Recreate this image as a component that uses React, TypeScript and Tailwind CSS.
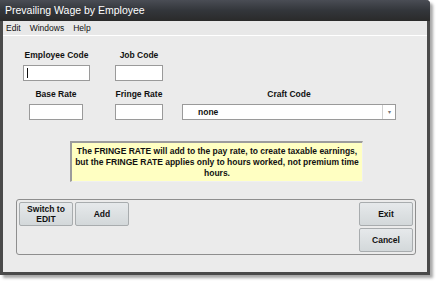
import React from "react";

const font = { fontFamily: '"Liberation Sans", Arial, sans-serif' };

function Field({ label, width, className = "", caret = false }: { label: string; width: string; className?: string; caret?: boolean }) {
  return (
    <div className={`flex flex-col items-center ${className}`}>
      <span className="text-[8.5px] font-bold text-[#111] leading-[11px] mb-[4px]">{label}</span>
      <div className={`${width} h-[16px] bg-white border border-[#9a9a9a] flex items-center pl-[3px]`}>
        {caret && <div className="w-px h-[10px] bg-[#111]" />}
      </div>
    </div>
  );
}

function Btn({ children, className = "" }: { children: React.ReactNode; className?: string }) {
  return (
    <button className={`w-[54px] h-[24px] rounded-[2px] border border-[#a8acae] bg-gradient-to-b from-[#e6e9eb] to-[#d3d8da] text-[8.5px] font-bold leading-[10px] text-[#111] ${className}`}>
      {children}
    </button>
  );
}

export default function App() {
  return (
    <div className="w-[441px] h-[286px] bg-white" style={font}>
      <div className="w-[430px] h-[275px] flex flex-col border-x-[3px] border-b-[3px] border-[#4a4a4a] rounded-tr-[4px] shadow-[3px_3px_3px_rgba(0,0,0,0.35)]">
        {/* Title */}
        <div className="h-[21px] -mx-[3px] px-[5px] flex items-center bg-gradient-to-b from-[#4a4d55] via-[#33363b] to-[#2a2a2a] text-white text-[10.5px] rounded-tr-[4px]">
          Prevailing Wage by Employee
        </div>

        {/* Menu */}
        <div className="h-[15px] flex items-center gap-[9px] px-[3px] bg-[#e8e8e8] border-b border-white text-[8.5px] text-[#111]">
          <span>Edit</span>
          <span>Windows</span>
          <span>Help</span>
        </div>

        {/* Body */}
        <div className="flex-1 bg-[#ebebeb] flex flex-col">
          <div className="flex mt-[14px] ml-[20px]">
            <Field label="Employee Code" width="w-[67px]" caret />
            <Field label="Job Code" width="w-[48px]" className="ml-[25px]" />
          </div>
          <div className="flex mt-[8px]">
            <Field label="Base Rate" width="w-[54px]" className="ml-[26px]" />
            <Field label="Fringe Rate" width="w-[48px]" className="ml-[32px]" />
            <div className="flex flex-col items-center ml-[19px]">
              <span className="text-[8.5px] font-bold text-[#111] leading-[11px] mb-[4px]">Craft Code</span>
              <div className="w-[214px] h-[16px] bg-white border border-[#9a9a9a] flex items-center">
                <span className="flex-1 pl-[15px] text-[8.5px] font-bold text-[#111]">none</span>
                <span className="w-[13px] h-full border-l border-[#d0d0d0] flex items-center justify-center text-[6px] text-[#777]">▾</span>
              </div>
            </div>
          </div>

          <div className="mt-[21px] ml-[67px] w-[293px] h-[41px] bg-[#ffffc2] border-t-2 border-l-2 border-[#9c9c9c] border-b border-r border-b-[#f0f0f0] border-r-[#f0f0f0] flex items-center justify-center text-center">
            <p className="text-[8.5px] font-bold leading-[11px] text-[#111] whitespace-nowrap">
              The FRINGE RATE will add to the pay rate, to create taxable earnings,
              <br />
              but the FRINGE RATE applies only to hours worked, not premium time
              <br />
              hours.
            </p>
          </div>

          <div className="mt-[17px] ml-[13px] w-[400px] h-[56px] border border-[#8e8e8e] rounded-[3px] flex justify-between p-[2px]">
            <div className="flex gap-[2px]">
              <Btn>
                Switch to
                <br />
                EDIT
              </Btn>
              <Btn>Add</Btn>
            </div>
            <div className="flex flex-col gap-[2px]">
              <Btn>Exit</Btn>
              <Btn>Cancel</Btn>
            </div>
          </div>
        </div>
      </div>
    </div>
  );
}
